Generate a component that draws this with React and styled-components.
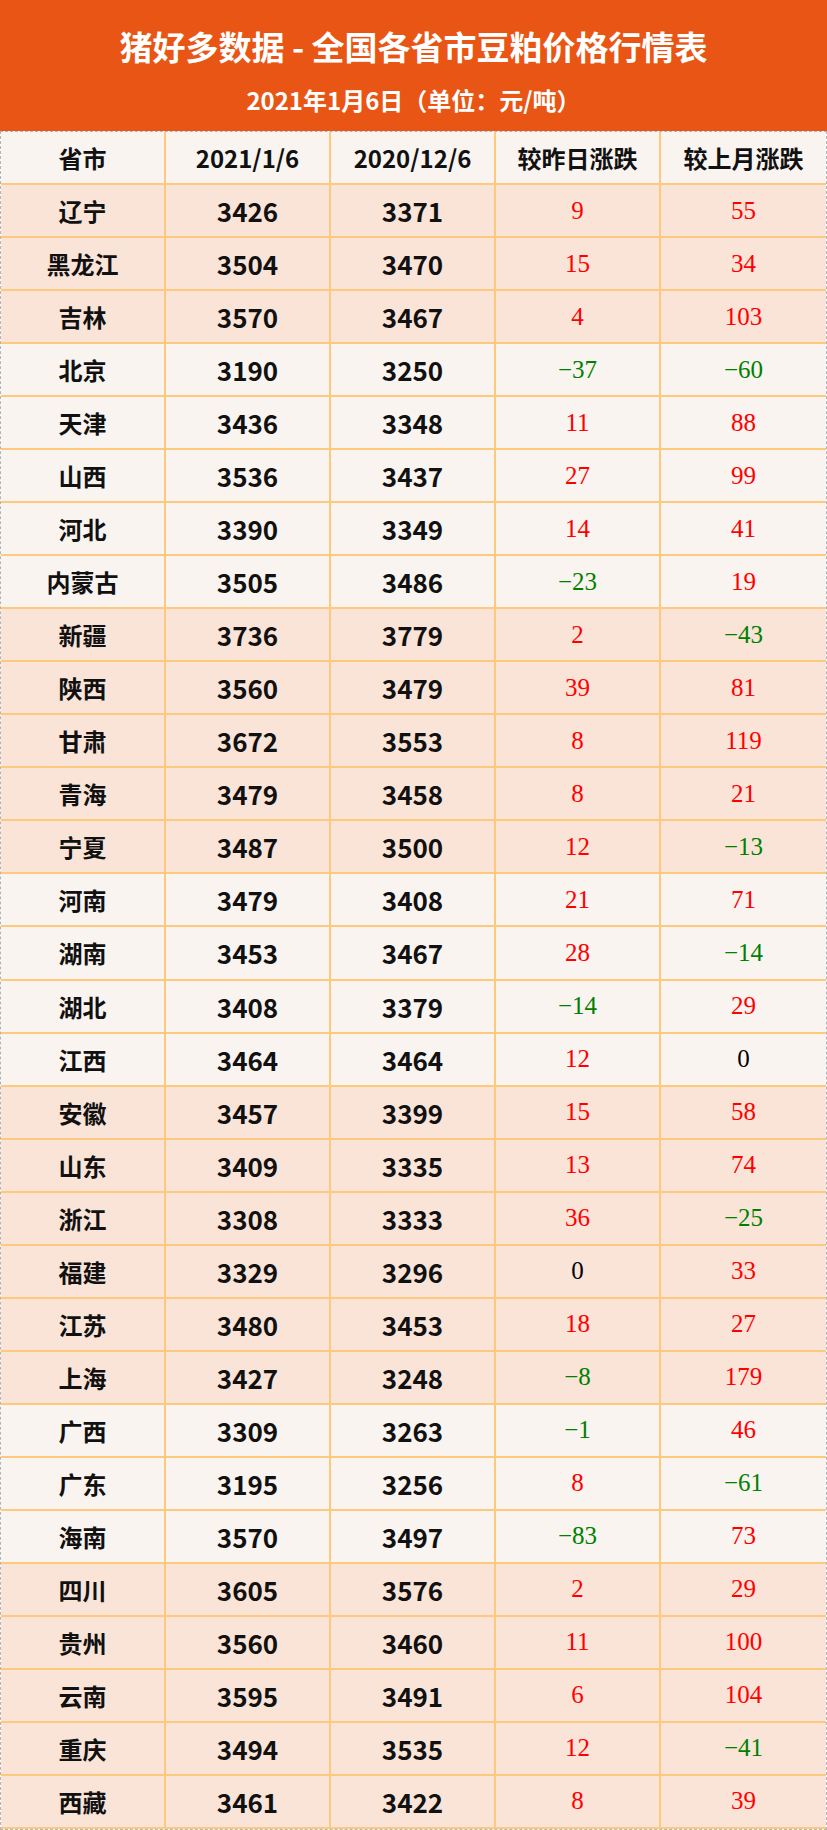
import React from "react";
import styled, { createGlobalStyle } from "styled-components";

const GlobalStyle = createGlobalStyle`
  html, body {
    margin: 0;
    padding: 0;
    background: #ffffff;
  }
`;

const rows = [
  ["辽宁", 3426, 3371, 9, 55],
  ["黑龙江", 3504, 3470, 15, 34],
  ["吉林", 3570, 3467, 4, 103],
  ["北京", 3190, 3250, -37, -60],
  ["天津", 3436, 3348, 11, 88],
  ["山西", 3536, 3437, 27, 99],
  ["河北", 3390, 3349, 14, 41],
  ["内蒙古", 3505, 3486, -23, 19],
  ["新疆", 3736, 3779, 2, -43],
  ["陕西", 3560, 3479, 39, 81],
  ["甘肃", 3672, 3553, 8, 119],
  ["青海", 3479, 3458, 8, 21],
  ["宁夏", 3487, 3500, 12, -13],
  ["河南", 3479, 3408, 21, 71],
  ["湖南", 3453, 3467, 28, -14],
  ["湖北", 3408, 3379, -14, 29],
  ["江西", 3464, 3464, 12, 0],
  ["安徽", 3457, 3399, 15, 58],
  ["山东", 3409, 3335, 13, 74],
  ["浙江", 3308, 3333, 36, -25],
  ["福建", 3329, 3296, 0, 33],
  ["江苏", 3480, 3453, 18, 27],
  ["上海", 3427, 3248, -8, 179],
  ["广西", 3309, 3263, -1, 46],
  ["广东", 3195, 3256, 8, -61],
  ["海南", 3570, 3497, -83, 73],
  ["四川", 3605, 3576, 2, 29],
  ["贵州", 3560, 3460, 11, 100],
  ["云南", 3595, 3491, 6, 104],
  ["重庆", 3494, 3535, 12, -41],
  ["西藏", 3461, 3422, 8, 39],
];

// regional groups alternate between pink and light rows
const groupSizes = [3, 5, 5, 4, 6, 3, 5];
const shadeFor = (() => {
  const list = [];
  groupSizes.forEach((n, g) => {
    for (let i = 0; i < n; i++) list.push(g % 2 === 0 ? "pink" : "light");
  });
  return list;
})();

const headers = ["省市", "2021/1/6", "2020/12/6", "较昨日涨跌", "较上月涨跌"];

const Page = styled.div`
  width: 827px;
  height: 1830px;
  display: flex;
  flex-direction: column;
  font-family: "Noto Sans CJK SC", "Noto Sans", sans-serif;
  text-spacing-trim: space-all;
`;

const Banner = styled.header`
  height: 131px;
  background: #e95514;
  color: #ffffff;
  display: flex;
  flex-direction: column;
  align-items: center;
  box-sizing: border-box;
  padding-top: 19px;
`;

const Title = styled.h1`
  margin: 0;
  font-size: 33px;
  font-weight: 700;
  line-height: 54px;
`;

const Subtitle = styled.div`
  margin-top: 13px;
  font-size: 24px;
  font-weight: 700;
  line-height: 28px;
`;

const Table = styled.div`
  flex: 1;
  display: grid;
  grid-template-columns: repeat(5, 1fr);
  grid-template-rows: repeat(32, 1fr);
  border: 1px dashed #b4b4b4;
`;

const Cell = styled.div`
  display: flex;
  align-items: center;
  justify-content: center;
  background: ${(p) => (p.$shade === "pink" ? "#fae4d8" : "#f9f4f0")};
  border-bottom: 2px solid #fdc97c;
  border-right: ${(p) => (p.$last ? "0" : "2px solid #fdc97c")};
  box-sizing: border-box;
  color: #111111;
`;

const HeadText = styled.span`
  font-size: 24px;
  font-weight: 700;
`;

const Province = styled.span`
  font-size: 24px;
  font-weight: 700;
`;

const Price = styled.span`
  font-size: 26px;
  font-weight: 700;
`;

const Change = styled.span`
  font-family: "Liberation Serif", "Times New Roman", serif;
  font-size: 25px;
  color: ${(p) => (p.$value > 0 ? "#ff0000" : p.$value < 0 ? "#008000" : "#000000")};
`;

const fmt = (v) => (v < 0 ? `−${Math.abs(v)}` : `${v}`);

export default function App() {
  return (
    <>
      <GlobalStyle />
      <Page>
        <Banner>
          <Title>猪好多数据 - 全国各省市豆粕价格行情表</Title>
          <Subtitle>2021年1月6日（单位：元/吨）</Subtitle>
        </Banner>
        <Table>
          {headers.map((h, i) => (
            <Cell key={h} $shade="light" $last={i === 4}>
              <HeadText>{h}</HeadText>
            </Cell>
          ))}
          {rows.map((r, idx) => {
            const shade = shadeFor[idx];
            return (
              <React.Fragment key={r[0]}>
                <Cell $shade={shade}>
                  <Province>{r[0]}</Province>
                </Cell>
                <Cell $shade={shade}>
                  <Price>{r[1]}</Price>
                </Cell>
                <Cell $shade={shade}>
                  <Price>{r[2]}</Price>
                </Cell>
                <Cell $shade={shade}>
                  <Change $value={r[3]}>{fmt(r[3])}</Change>
                </Cell>
                <Cell $shade={shade} $last>
                  <Change $value={r[4]}>{fmt(r[4])}</Change>
                </Cell>
              </React.Fragment>
            );
          })}
        </Table>
      </Page>
    </>
  );
}
